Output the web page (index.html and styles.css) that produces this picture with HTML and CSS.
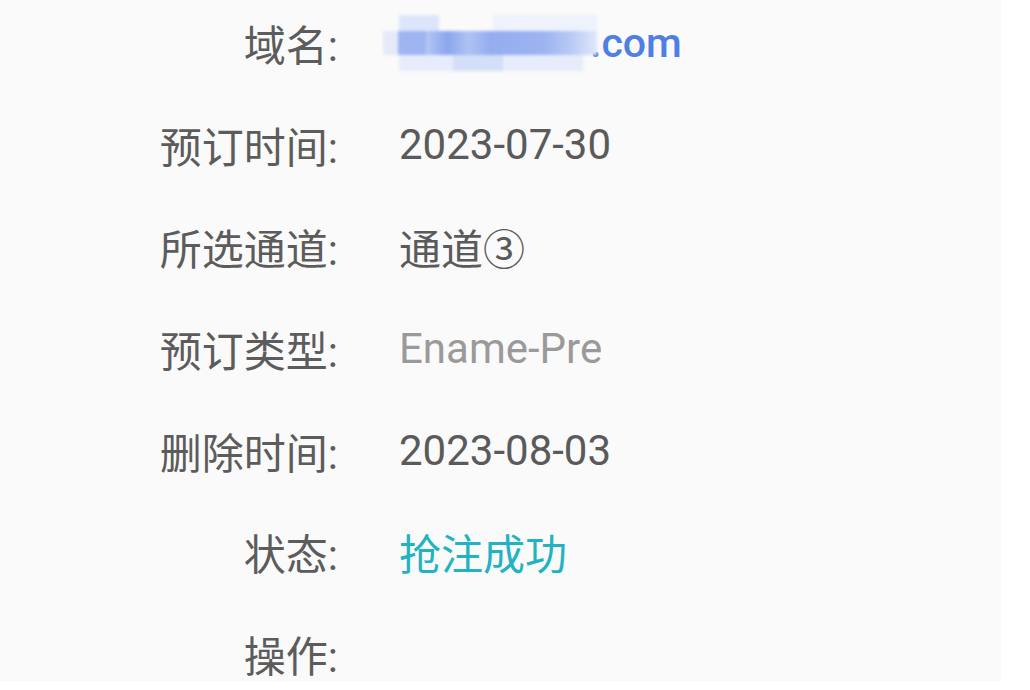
FILE: index.html
```html
<!DOCTYPE html>
<html lang="zh-CN">
<head>
    <meta charset="UTF-8">
    <meta name="viewport" content="width=device-width, initial-scale=1.0">
    <title>预订详情</title>
    <link rel="stylesheet" href="styles.css">
</head>
<body>
    <div class="panel">
        <dl class="detail">
            <dt>域名:</dt>
            <dd class="domain">
                <span class="masked">
                    <i class="blk b1"></i><i class="blk b2"></i><i class="blk b3"></i><i class="blk b4"></i><i class="blk b5"></i>
                </span><span class="tld">.com</span>
            </dd>
            <dt>预订时间:</dt>
            <dd>2023-07-30</dd>
            <dt>所选通道:</dt>
            <dd>通道③</dd>
            <dt>预订类型:</dt>
            <dd class="muted">Ename-Pre</dd>
            <dt>删除时间:</dt>
            <dd>2023-08-03</dd>
            <dt>状态:</dt>
            <dd class="success">抢注成功</dd>
            <dt>操作:</dt>
            <dd></dd>
        </dl>
    </div>
</body>
</html>
```

FILE: styles.css
```css
body, html {
    margin: 0;
    padding: 0;
    height: 100%;
    overflow: hidden;
    background: #ffffff;
    font-family: Roboto, "Noto Sans CJK SC", sans-serif;
}
.panel {
    width: 1001px;
    height: 100%;
    background: #fafafa;
}
.detail {
    display: grid;
    grid-template-columns: 338px 1fr;
    grid-auto-rows: 101.8px;
    column-gap: 61px;
    align-items: center;
    margin: -8px 0 0 0;
    font-size: 42px;
    color: #5c5c5c;
}
.detail dt {
    text-align: right;
}
.detail dd {
    margin: 0;
    color: #5a5a5a;
}
.detail dd.muted {
    color: #9a9a9a;
}
.detail dd.success {
    color: #22b3c2;
}
.domain {
    display: flex;
    align-items: center;
    margin-left: -16px !important;
}
.masked {
    position: relative;
    width: 214px;
    height: 56px;
    filter: blur(1.8px);
}
.blk {
    position: absolute;
    display: block;
}
.b1 {
    left: 0;
    top: 16px;
    width: 214px;
    height: 24px;
    background: linear-gradient(90deg, #e4eaf9 0%, #e4eaf9 7%, #9fb5f1 7%, #9fb5f1 20%, #b5c7f4 20%, #8ba6ef 30%, #aec2f4 40%, #93adf0 50%, #9cb3f1 75%, #b8caf5 88%, #dfe7fa 100%);
}
.b2 {
    left: 16px;
    top: 0;
    width: 40px;
    height: 16px;
    background: #dce5fa;
}
.b3 {
    left: 16px;
    top: 40px;
    width: 184px;
    height: 16px;
    background: #e6ecfb;
}
.b4 {
    left: 110px;
    top: 0;
    width: 104px;
    height: 16px;
    background: #eef2fc;
}
.b5 {
    left: 70px;
    top: 40px;
    width: 50px;
    height: 16px;
    background: #d3def8;
}
.tld {
    color: #4f7fe3;
    font-size: 41px;
    font-weight: 500;
    margin-left: -7px;
}
```
